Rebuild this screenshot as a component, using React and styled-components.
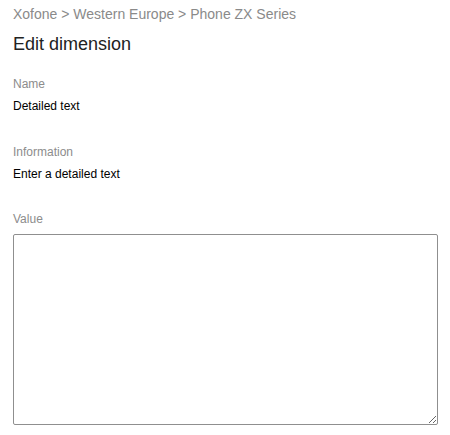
import React, { useEffect, useRef } from "react";
import styled, { createGlobalStyle } from "styled-components";

const Global = createGlobalStyle`
  html, body { margin: 0; padding: 0; background: #fff; }
  body { font-family: "Liberation Sans", Arial, sans-serif; }
`;

const Page = styled.div`
  display: flex;
  flex-direction: column;
  padding: 5px 12px 0 13px;
`;

const Breadcrumb = styled.div`
  font-size: 14px;
  line-height: 18px;
  color: #8a8a8a;
`;

const Title = styled.h1`
  margin: 10px 0 0;
  font-size: 18px;
  font-weight: normal;
  line-height: 22px;
  color: #222;
`;

const Field = styled.div`
  display: flex;
  flex-direction: column;
  margin-top: ${(p) => p.$gap}px;
`;

const Label = styled.div`
  font-size: 12px;
  line-height: 15px;
  color: #8c8c8c;
`;

const Value = styled.div`
  margin-top: 7px;
  font-size: 12px;
  line-height: 15px;
  color: #000;
`;

const TextArea = styled.textarea`
  margin-top: 7px;
  box-sizing: border-box;
  width: 425px;
  height: 191px;
  border: 1px solid #8f8f8f;
  border-radius: 2px;
  padding: 4px 3px;
  font-family: "Liberation Sans", Arial, sans-serif;
  font-size: 13px;
  outline: none;
  resize: both;
  caret-color: #000;
`;

export default function App() {
  const ref = useRef(null);
  useEffect(() => {
    if (ref.current) ref.current.focus();
  }, []);
  return (
    <>
      <Global />
      <Page>
        <Breadcrumb>Xofone &gt; Western Europe &gt; Phone ZX Series</Breadcrumb>
        <Title>Edit dimension</Title>
        <Field $gap={22}>
          <Label>Name</Label>
          <Value>Detailed text</Value>
        </Field>
        <Field $gap={31}>
          <Label>Information</Label>
          <Value>Enter a detailed text</Value>
        </Field>
        <Field $gap={30}>
          <Label>Value</Label>
          <TextArea ref={ref} autoFocus />
        </Field>
      </Page>
    </>
  );
}
